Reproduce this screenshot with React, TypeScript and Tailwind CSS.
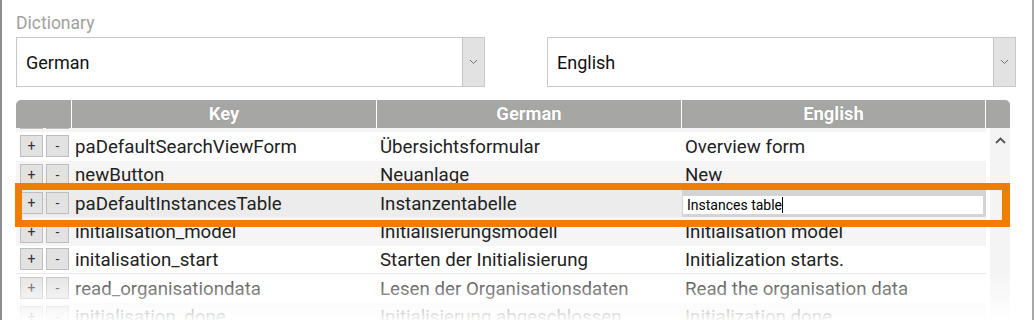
import React from "react";

type Row = { k: string; de: string; en: string; bg: string; edit?: boolean; hidden?: boolean };

const rows: Row[] = [
  { k: "", de: "", en: "", bg: "bg-[#f5f5f5]", hidden: true },
  { k: "paDefaultSearchViewForm", de: "Übersichtsformular", en: "Overview form", bg: "bg-white" },
  { k: "newButton", de: "Neuanlage", en: "New", bg: "bg-[#f5f5f5]" },
  { k: "paDefaultInstancesTable", de: "Instanzentabelle", en: "Instances table", bg: "bg-[#ececec]", edit: true },
  { k: "initialisation_model", de: "Initialisierungsmodell", en: "Initialisation model", bg: "bg-[#f5f5f5]" },
  { k: "initalisation_start", de: "Starten der Initialisierung", en: "Initialization starts.", bg: "bg-white border-b border-[#e6e6e6]" },
  { k: "read_organisationdata", de: "Lesen der Organisationsdaten", en: "Read the organisation data", bg: "bg-white" },
  { k: "initialisation_done", de: "Initialisierung abgeschlossen", en: "Initialization done", bg: "bg-[#f5f5f5]" },
];

function Chevron() {
  return (
    <svg width="9" height="6" viewBox="0 0 9 6" fill="none">
      <path d="M1 1L4.5 4.5L8 1" stroke="#707070" strokeWidth="1" />
    </svg>
  );
}

function Select({ label }: { label: string }) {
  return (
    <div className="w-[469px] h-[50px] border border-[#c8c8c8] bg-white flex items-stretch">
      <div className="flex-1 flex items-center pl-[9px] text-[18px] text-[#111]">{label}</div>
      <div className="w-[22px] bg-[#e2e2e2] border-l border-[#c4c4c4] flex items-center justify-center">
        <Chevron />
      </div>
    </div>
  );
}

function Btn({ t }: { t: string }) {
  return (
    <div className="w-[23px] h-[22px] border border-[#bdbdbd] bg-[#e2e2e2] flex items-center justify-center text-[14px] text-[#333] leading-none">
      {t}
    </div>
  );
}

export default function App() {
  return (
    <div className="relative w-[1034px] h-[320px] overflow-hidden bg-white border-l-[2px] border-l-[#8c8c8c] border-r-[2px] border-r-[#a8a8a8] font-['Roboto',sans-serif]">
      <div className="pl-[14px] pt-[13px]">
        <div className="h-[20px] text-[17.5px] leading-[20px] text-[#a0a0a0]">Dictionary</div>
        <div className="mt-[4px] flex gap-[62px]">
          <Select label="German" />
          <Select label="English" />
        </div>
        <div className="relative mt-[13px] w-[994px]">
          <div className="flex h-[28px] bg-[#a6a6a5] rounded-t-[5px] text-white font-bold text-[18.4px] [text-shadow:0_0_1px_rgba(0,0,0,0.25)]">
            <div className="w-[56px] border-r border-white" />
            <div className="w-[305px] border-r border-white flex items-center justify-center">Key</div>
            <div className="w-[305px] border-r border-white flex items-center justify-center">German</div>
            <div className="w-[304px] border-r border-white flex items-center justify-center">English</div>
            <div className="w-[24px]" />
          </div>
          <div className="flex h-[192px] overflow-hidden">
            <div className="w-[970px]">
              {rows.map((r, i) => (
                <div
                  key={i}
                  className={`flex items-center h-[28.4px] text-[18.7px] text-[#222] ${r.bg} ${i === 0 ? "mt-[-24.2px]" : ""}`}
                >
                  <div className="w-[56px] flex gap-[3px] pl-[4px]">
                    <Btn t={r.hidden ? "" : "+"} />
                    <Btn t={r.hidden ? "" : "-"} />
                  </div>
                  <div className="w-[305px] pl-[3px] pt-[1px] whitespace-nowrap">{r.k}</div>
                  <div className="w-[305px] pl-[3px] pt-[1px] whitespace-nowrap">{r.de}</div>
                  {r.edit ? (
                    <div className="w-[304px] self-stretch bg-[#d4d4d4] pt-[7px] pb-[3px] pl-[1px] pr-[3px]">
                      <div className="h-full bg-white flex items-center pl-[4px] text-[14px] text-black">
                        <span>{r.en}</span>
                        <span className="inline-block w-px h-[16px] bg-black" />
                      </div>
                    </div>
                  ) : (
                    <div className="w-[304px] pl-[3px] pt-[1px] whitespace-nowrap">{r.en}</div>
                  )}
                </div>
              ))}
            </div>
            <div className="ml-[4px] w-[20px] bg-[#f4f4f4] flex justify-center pt-[9px]">
              <svg width="11" height="7" viewBox="0 0 11 7" fill="none">
                <path d="M1 6L5.5 1.5L10 6" stroke="#555" strokeWidth="1.8" />
              </svg>
            </div>
          </div>
          <div className="absolute left-[-1px] top-[83px] w-[995px] h-[44px] border-[7px] border-r-[8px] border-[#f07d00]" />
        </div>
      </div>
      <div className="absolute left-0 right-0 bottom-0 h-[52px] bg-linear-to-b from-white/0 to-white/95" />
    </div>
  );
}
